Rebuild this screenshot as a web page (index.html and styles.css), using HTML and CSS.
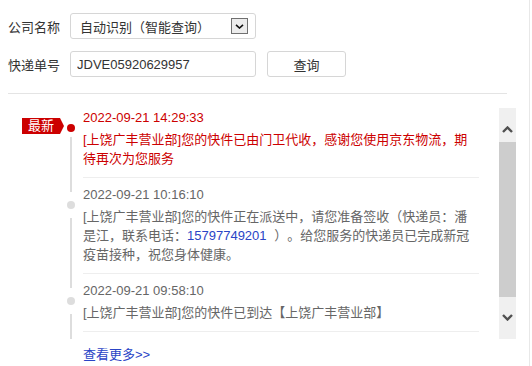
FILE: index.html
```html
<!DOCTYPE html>
<html lang="zh-CN">
<head>
    <meta charset="UTF-8">
    <title>快递查询</title>
    <link rel="stylesheet" href="styles.css">
</head>
<body>
    <div class="page">
        <div class="form-row">
            <span class="label">公司名称</span>
            <div class="select">
                <span>自动识别（智能查询）</span>
                <span class="select-arrow">
                    <svg width="9" height="5" viewBox="0 0 9 5"><polyline points="1,0.8 4.5,4 8,0.8" fill="none" stroke="#111" stroke-width="1.6"/></svg>
                </span>
            </div>
        </div>
        <div class="form-row">
            <span class="label">快递单号</span>
            <input class="text-input" type="text" value="JDVE05920629957">
            <button class="query-btn">查询</button>
        </div>

        <div class="divider"></div>

        <div class="track-box">
            <div class="track">
                <div class="track-item latest">
                    <span class="badge">最新</span>
                    <span class="dot"></span>
                    <div class="time">2022-09-21 14:29:33</div>
                    <div class="desc">[上饶广丰营业部]您的快件已由门卫代收，感谢您使用京东物流，期待再次为您服务</div>
                </div>
                <div class="track-item">
                    <span class="dot"></span>
                    <div class="time">2022-09-21 10:16:10</div>
                    <div class="desc">[上饶广丰营业部]您的快件正在派送中，请您准备签收（快递员：潘是江，联系电话：<span class="phone">15797749201</span> <span class="fw paren">）</span><span class="fw">。</span>给您服务的快递员已完成新冠疫苗接种，祝您身体健康。</div>
                </div>
                <div class="track-item">
                    <span class="dot"></span>
                    <div class="time">2022-09-21 09:58:10</div>
                    <div class="desc">[上饶广丰营业部]您的快件已到达【上饶广丰营业部】</div>
                </div>
            </div>
            <div class="scrollbar">
                <div class="sb-btn up">
                    <svg width="11" height="7" viewBox="0 0 11 7"><polyline points="1,6 5.5,1.5 10,6" fill="none" stroke="#505050" stroke-width="2.4"/></svg>
                </div>
                <div class="sb-thumb"></div>
                <div class="sb-btn down">
                    <svg width="11" height="7" viewBox="0 0 11 7"><polyline points="1,1 5.5,5.5 10,1" fill="none" stroke="#505050" stroke-width="2.4"/></svg>
                </div>
            </div>
        </div>

        <a class="more" href="#">查看更多&gt;&gt;</a>
    </div>
</body>
</html>
```

FILE: styles.css
```css
body {
    margin: 0;
    background: #fff;
    font-family: "Liberation Sans", Arial, "Noto Sans CJK SC", sans-serif;
    font-size: 13px;
    color: #333;
}
.page {
    padding: 13px 8px 0;
    border-right: 1px solid #e8e8e8;
    width: 513px;
    height: 353px;
}
.form-row {
    display: flex;
    align-items: center;
    height: 26px;
    margin-bottom: 12px;
}
.form-row:last-of-type {
    margin-bottom: 0;
}
.label {
    width: 62px;
    color: #333;
}
.select,
.text-input {
    box-sizing: border-box;
    width: 186px;
    height: 26px;
    border: 1px solid #d6d6d6;
    border-radius: 3px;
    background: #fff;
}
.select {
    display: flex;
    align-items: center;
    justify-content: space-between;
    padding: 0 7px 0 9px;
    color: #333;
}
.select-arrow {
    box-sizing: border-box;
    width: 17px;
    height: 16px;
    border: 1px solid #707070;
    background: #ececec;
    display: flex;
    align-items: center;
    justify-content: center;
}
.text-input {
    padding: 0 6px;
    font-family: inherit;
    font-size: 13px;
    color: #333;
    outline: none;
}
.query-btn {
    box-sizing: border-box;
    width: 79px;
    height: 26px;
    margin-left: 11px;
    border: 1px solid #d6d6d6;
    border-radius: 3px;
    background: #fff;
    font-family: inherit;
    font-size: 13px;
    color: #333;
}
.divider {
    width: 499px;
    margin-top: 16px;
    border-top: 1px solid #e4e4e4;
}
.track-box {
    display: flex;
    width: 508px;
    height: 231px;
    margin-top: 14px;
}
.track {
    flex: 1;
    position: relative;
    overflow: hidden;
}
.track::before {
    content: "";
    position: absolute;
    left: 62px;
    top: 20px;
    bottom: 0;
    width: 2px;
    background: #ddd;
}
.track-item {
    position: relative;
    width: 396px;
    margin-left: 75px;
    padding: 7px 0 9px;
    border-bottom: 1px solid #eee;
}
.track-item.latest {
    padding-top: 0;
}
.time {
    line-height: 20px;
    color: #666;
}
.desc {
    margin-top: 2px;
    line-height: 19px;
    color: #666;
}
.fw {
    display: inline-block;
    width: 13px;
}
.fw.paren {
    margin-left: 4px;
}
.latest .time,
.latest .desc {
    color: #c00;
}
.phone {
    color: #2a44c6;
}
.dot {
    position: absolute;
    left: -16px;
    width: 8px;
    height: 8px;
    margin-top: 16px;
    border-radius: 50%;
    background: #ddd;
    box-shadow: 0 0 0 9px #fff;
    z-index: 1;
}
.latest .dot {
    background: #c00;
    box-shadow: 0 0 0 5px #fff;
}
.badge {
    position: absolute;
    left: -61px;
    top: 10px;
    width: 38px;
    height: 16px;
    line-height: 16px;
    text-align: center;
    background: #c00;
    color: #fff;
    z-index: 2;
}
.badge::after {
    content: "";
    position: absolute;
    right: -4px;
    top: 0;
    border-left: 4px solid #c00;
    border-top: 8px solid transparent;
    border-bottom: 8px solid transparent;
}
.scrollbar {
    width: 17px;
    background: #f0f0f0;
    display: flex;
    flex-direction: column;
}
.sb-btn {
    display: flex;
    justify-content: center;
}
.sb-btn.up {
    height: 34px;
    padding-top: 18px;
    box-sizing: border-box;
}
.sb-btn.down {
    flex: 1;
    padding-top: 17px;
    box-sizing: border-box;
}
.sb-thumb {
    height: 155px;
    background: #cdcdcd;
}
.more {
    display: inline-block;
    margin: 6px 0 0 75px;
    line-height: 19px;
    color: #2a44c6;
    text-decoration: none;
}
```
